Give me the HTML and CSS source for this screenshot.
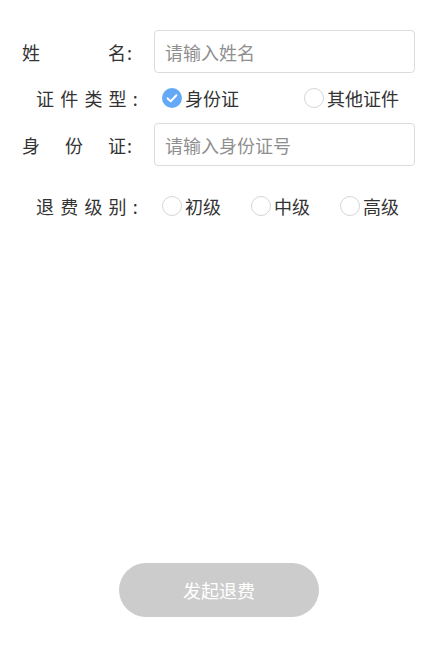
FILE: index.html
```html
<!DOCTYPE html>
<html lang="zh-CN">
<head>
<meta charset="utf-8">
<title>发起退费</title>
<link rel="stylesheet" href="styles.css">
</head>
<body>
<div class="page">
  <form class="form">
    <div class="row row-input">
      <label class="label justify"><span class="label-text">姓名</span><span class="colon">:</span></label>
      <input class="input" type="text" placeholder="请输入姓名">
    </div>
    <div class="row row-radio">
      <span class="label spaced">证件类型:</span>
      <div class="radio-group cert">
        <span class="radio"><span class="dot checked"><svg viewBox="0 0 20 20" width="20" height="20"><circle cx="10" cy="10" r="10" fill="#63a9f6"/><path d="M5.6 10.4 L8.7 13.3 L14.4 7.2" fill="none" stroke="#fff" stroke-width="2" stroke-linecap="round" stroke-linejoin="round"/></svg></span><span class="radio-text">身份证</span></span>
        <span class="radio"><span class="dot"></span><span class="radio-text">其他证件</span></span>
      </div>
    </div>
    <div class="row row-input">
      <label class="label justify"><span class="label-text">身份证</span><span class="colon">:</span></label>
      <input class="input" type="text" placeholder="请输入身份证号">
    </div>
    <div class="row row-level">
      <span class="label spaced">退费级别:</span>
      <div class="radio-group level">
        <span class="radio"><span class="dot"></span><span class="radio-text">初级</span></span>
        <span class="radio"><span class="dot"></span><span class="radio-text">中级</span></span>
        <span class="radio"><span class="dot"></span><span class="radio-text">高级</span></span>
      </div>
    </div>
  </form>
  <div class="footer">
    <button class="submit" type="button">发起退费</button>
  </div>
</div>
</body>
</html>
```

FILE: styles.css
```css
html, body {
  margin: 0;
  padding: 0;
  background: #fff;
}
body {
  font-family: "Noto Sans CJK SC", "Noto Sans", sans-serif;
  color: #333;
  font-size: 18px;
}
.page {
  width: 433px;
  height: 648px;
  display: flex;
  flex-direction: column;
  box-sizing: border-box;
  padding-top: 30px;
}
.form {
  display: flex;
  flex-direction: column;
}
.row {
  display: flex;
  align-items: center;
  padding: 0 18px 0 22px;
}
.row-input { height: 43px; }
.row-radio { height: 50px; }
.row-level { height: 80px; }
.label {
  flex: none;
  width: 116px;
  margin-right: 16px;
  font-size: 18px;
  line-height: 24px;
  color: #333;
  white-space: nowrap;
}
.label.justify {
  display: flex;
  align-items: baseline;
  padding-right: 6px;
  box-sizing: border-box;
}
.label-text {
  flex: 1;
  text-align: justify;
  text-align-last: justify;
  text-justify: inter-character;
}
.colon {
  flex: none;
  margin-left: 1px;
}
.label.spaced {
  text-align: right;
  letter-spacing: 6.2px;
  width: 122px;
  margin-right: 10px;
}
.input {
  flex: 1;
  min-width: 0;
  height: 43px;
  box-sizing: border-box;
  border: 1px solid #dcdcdc;
  border-radius: 4px;
  padding: 0 10px;
  font-family: inherit;
  font-size: 18px;
  color: #333;
  outline: none;
  background: #fff;
}
.input::placeholder {
  color: #8f8f8f;
}
.radio-group {
  display: flex;
  align-items: center;
  padding-left: 8px;
}
.radio-group.cert .radio:first-child {
  width: 142px;
}
.radio-group.level {
  gap: 30px;
}
.radio {
  display: inline-flex;
  align-items: center;
  gap: 3px;
  color: #333;
  font-size: 18px;
  line-height: 24px;
}
.dot {
  width: 20px;
  height: 20px;
  box-sizing: border-box;
  border: 1px solid #d6d6d6;
  border-radius: 50%;
  background: #fff;
  flex: none;
  display: block;
}
.dot.checked {
  border: none;
}
.dot svg {
  display: block;
}
.footer {
  margin-top: auto;
  margin-bottom: 31px;
  display: flex;
  justify-content: center;
  padding-left: 5px;
}
.submit {
  width: 200px;
  height: 54px;
  border: none;
  border-radius: 27px;
  background: #cccccc;
  color: #fff;
  font-family: inherit;
  font-size: 18px;
  padding: 0;
}
```
